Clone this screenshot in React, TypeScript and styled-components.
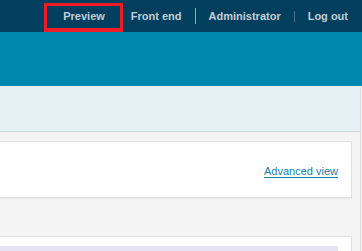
import styled, { createGlobalStyle } from "styled-components";

const GlobalStyle = createGlobalStyle`
  html, body {
    margin: 0;
    padding: 0;
    background: #f4f4f4;
    font-family: "Liberation Sans", Arial, Helvetica, sans-serif;
    overflow: hidden;
  }
`;

const Page = styled.div`
  width: 362px;
  height: 251px;
  overflow: hidden;
  display: flex;
  flex-direction: column;

  & > * {
    flex-shrink: 0;
  }
`;

const TopBar = styled.nav`
  height: 32px;
  background: #023f5e;
  display: flex;
  justify-content: flex-end;
  align-items: stretch;
  padding-right: 1px;
`;

const NavItem = styled.a`
  position: relative;
  display: flex;
  align-items: center;
  padding: 0 13px;
  font-size: 11px;
  font-weight: bold;
  color: #c6cdd3;
  text-decoration: none;
  line-height: 32px;
`;

const Highlight = styled.span`
  position: absolute;
  top: 3px;
  bottom: 0;
  left: -6px;
  right: -5px;
  border: 3px solid #ee1c25;
  border-bottom-width: 4px;
`;

const Divider = styled.span<{ $color: string; $top: number; $height: number }>`
  width: 1px;
  align-self: flex-start;
  margin-top: ${(p) => p.$top}px;
  height: ${(p) => p.$height}px;
  background: ${(p) => p.$color};
`;

const Banner = styled.header`
  height: 54px;
  background: #0089ae;
`;

const Body = styled.div`
  flex: 1 0 auto;
  border-right: 1px solid #d6dadd;
  margin-right: 1px;
  display: flex;
  flex-direction: column;
`;

const SubHeader = styled.div`
  height: 45px;
  flex-shrink: 0;
  background: #e5f0f4;
  border-bottom: 1px solid #cbd9e1;
`;

const Content = styled.main`
  padding: 9px 8px 0 0;
  display: flex;
  flex-direction: column;
  gap: 38px;
`;

const Card = styled.section`
  flex-shrink: 0;
  margin-left: -1px;
  background: #ffffff;
  border: 1px solid #e0e0e0;
  box-shadow: 0 1px 1px rgba(0, 0, 0, 0.04);
`;

const ToolbarCard = styled(Card)`
  height: 55px;
  display: flex;
  align-items: center;
  justify-content: flex-end;
  padding-right: 13px;
`;

const AdvancedLink = styled.a`
  font-size: 11px;
  color: #1b7fa8;
  text-decoration: underline;
  text-underline-offset: 2px;
  margin-top: 2px;
`;

const ListCard = styled(Card)`
  padding: 9px 13px 0 0;
  height: 40px;
`;

const ListHead = styled.div`
  height: 30px;
  background: #e6e4f4;
`;

export default function App() {
  return (
    <Page>
      <GlobalStyle />
      <TopBar>
        <NavItem href="#">
          Preview
          <Highlight />
        </NavItem>
        <NavItem href="#">Front end</NavItem>
        <Divider $color="#d8935f" $top={8} $height={16} />
        <NavItem href="#">Administrator</NavItem>
        <Divider $color="#4f6f85" $top={11} $height={11} />
        <NavItem href="#">Log out</NavItem>
      </TopBar>
      <Banner />
      <Body>
        <SubHeader />
        <Content>
          <ToolbarCard>
            <AdvancedLink href="#">Advanced view</AdvancedLink>
          </ToolbarCard>
          <ListCard>
            <ListHead />
          </ListCard>
        </Content>
      </Body>
    </Page>
  );
}
